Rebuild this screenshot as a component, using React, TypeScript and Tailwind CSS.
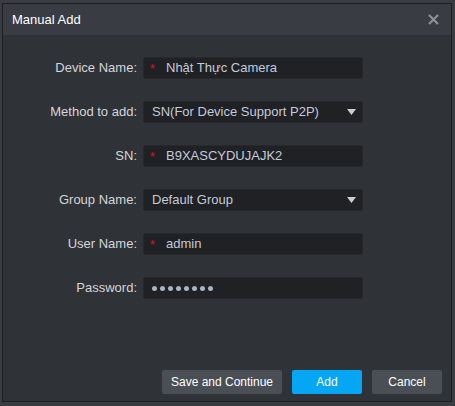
import React from "react";

const Row = ({ label, children }: { label: string; children: React.ReactNode }) => (
  <div className="flex items-center h-[22px]">
    <div className="w-[133px] text-right pr-[6px] text-[13px] text-[#d4d6da]">{label}</div>
    {children}
  </div>
);

const Input = ({ value, required }: { value: string; required?: boolean }) => (
  <div className="w-[220px] h-[22px] bg-[#1f2125] border border-[#26282c] rounded-[2px] flex items-center text-[13px] text-[#c3cbd9]">
    {required ? (
      <span className="w-[22px] pl-[6px] text-[#e0141e] text-[12px] leading-none self-start pt-[5px]">*</span>
    ) : (
      <span className="w-[8px]" />
    )}
    <span>{value}</span>
  </div>
);

const Select = ({ value }: { value: string }) => (
  <div className="w-[220px] h-[22px] bg-[#1f2125] border border-[#26282c] rounded-[2px] flex items-center text-[13px] text-[#c3cbd9] pl-[8px] pr-[6px]">
    <span className="flex-1">{value}</span>
    <svg width="9" height="6" viewBox="0 0 9 6">
      <path d="M0 0 H9 L4.5 6 Z" fill="#c8ccd3" />
    </svg>
  </div>
);

export default function App() {
  return (
    <div
      className="w-[455px] h-[406px] bg-[#393c41] pt-[3px] pl-[2px]"
      style={{ fontFamily: '"Liberation Sans", Arial, sans-serif' }}
    >
      <div className="w-[450px] h-[399px] border border-[#1c1e21] bg-[#2f3237] flex flex-col">
        <div className="h-[31px] bg-[#393c42] flex items-center justify-between pl-[9px] pr-[12px]">
          <span className="text-[13px] text-white">Manual Add</span>
          <svg width="11" height="11" viewBox="0 0 11 11">
            <path d="M1 1 L10 10 M10 1 L1 10" stroke="#8c9097" strokeWidth="2.2" />
          </svg>
        </div>
        <div className="flex flex-col gap-[22px] pt-[22px] pl-[7px]">
          <Row label="Device Name:">
            <Input value="Nhật Thực Camera" required />
          </Row>
          <Row label="Method to add:">
            <Select value="SN(For Device Support P2P)" />
          </Row>
          <Row label="SN:">
            <Input value="B9XASCYDUJAJK2" required />
          </Row>
          <Row label="Group Name:">
            <Select value="Default Group" />
          </Row>
          <Row label="User Name:">
            <Input value="admin" required />
          </Row>
          <Row label="Password:">
            <div className="w-[220px] h-[22px] bg-[#1f2125] border border-[#26282c] rounded-[2px] flex items-center pl-[8px] gap-[3px]">
              {Array.from({ length: 8 }).map((_, i) => (
                <span key={i} className="w-[5px] h-[5px] rounded-full bg-[#a9b3c4]" />
              ))}
            </div>
          </Row>
        </div>
        <div className="flex-1" />
        <div className="flex justify-end gap-[10px] pr-[9px] pb-[7px] text-[12px] text-white">
          <button className="w-[120px] h-[24px] bg-[#4a4f56] rounded-[2px]">Save and Continue</button>
          <button className="w-[70px] h-[24px] bg-[#05a6f4] rounded-[2px]">Add</button>
          <button className="w-[70px] h-[24px] bg-[#4a4f56] rounded-[2px]">Cancel</button>
        </div>
      </div>
    </div>
  );
}
